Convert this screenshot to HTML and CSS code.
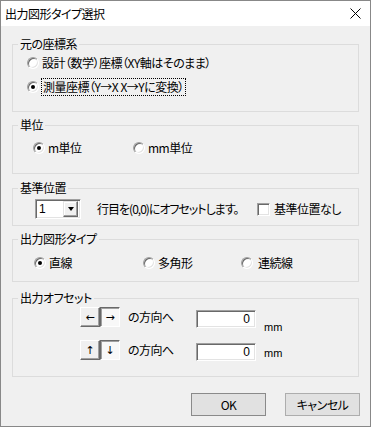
FILE: index.html
```html
<!DOCTYPE html>
<html lang="ja">
<head>
<meta charset="utf-8">
<title>出力図形タイプ選択</title>
<link rel="stylesheet" href="styles.css">
</head>
<body>
<div class="window">
  <div class="titlebar">
    <span class="title">出力図形タイプ選択</span>
    <svg class="close" width="11" height="11" viewBox="0 0 11 11"><path d="M0.5 0.5 L10.5 10.5 M10.5 0.5 L0.5 10.5" stroke="#000" stroke-width="1" fill="none"/></svg>
  </div>
  <div class="content">
    <fieldset class="group g1">
      <legend>元の座標系</legend>
      <div class="inner">
        <div class="row"><span class="radio"></span><span class="label">設計（数学）座標（XY軸はそのまま）</span></div>
        <div class="row"><span class="radio checked"></span><span class="label focus">測量座標（Y→X X→Yに変換）</span></div>
      </div>
    </fieldset>

    <fieldset class="group g2">
      <legend>単位</legend>
      <div class="inner hrow">
        <div class="opt w100"><span class="radio checked"></span><span class="label">m単位</span></div>
        <div class="opt"><span class="radio"></span><span class="label">mm単位</span></div>
      </div>
    </fieldset>

    <fieldset class="group g3">
      <legend>基準位置</legend>
      <div class="inner hrow">
        <div class="combo"><span class="combo-text">1</span><span class="combo-btn"><span class="tri"></span></span></div>
        <span class="offset-text">行目を(0,0)にオフセットします。</span>
        <div class="opt"><span class="check"></span><span class="label cb-label">基準位置なし</span></div>
      </div>
    </fieldset>

    <fieldset class="group g4">
      <legend>出力図形タイプ</legend>
      <div class="inner hrow">
        <div class="opt w109"><span class="radio checked"></span><span class="label">直線</span></div>
        <div class="opt w98"><span class="radio"></span><span class="label">多角形</span></div>
        <div class="opt"><span class="radio"></span><span class="label wide">連続線</span></div>
      </div>
    </fieldset>

    <fieldset class="group g5">
      <legend>出力オフセット</legend>
      <div class="inner">
        <div class="orow">
          <span class="tbtn">←</span><span class="tbtn pressed">→</span>
          <span class="dir">の方向へ</span>
          <span class="num">0</span>
          <span class="unit unit1">mm</span>
        </div>
        <div class="orow r2">
          <span class="tbtn">↑</span><span class="tbtn pressed">↓</span>
          <span class="dir">の方向へ</span>
          <span class="num">0</span>
          <span class="unit unit2">mm</span>
        </div>
      </div>
    </fieldset>

    <div class="buttons">
      <span class="btn default">OK</span>
      <span class="btn">キャンセル</span>
    </div>
  </div>
</div>
</body>
</html>
```

FILE: styles.css
```css
* { box-sizing: border-box; }
html, body { margin: 0; padding: 0; }
body {
  width: 371px;
  height: 427px;
  overflow: hidden;
  background: #f0f0f0;
  color: #000;
  font-family: "Noto Sans CJK JP", "Noto Sans", sans-serif;
  font-size: 12px;
  line-height: 14px;
  font-feature-settings: "palt";
  letter-spacing: -0.5px;
}
.window {
  width: 371px;
  height: 427px;
  border: 1px solid #888888;
  background: #f0f0f0;
  display: flex;
  flex-direction: column;
}
.titlebar {
  height: 25px;
  flex-shrink: 0;
  background: #ffffff;
  display: flex;
  align-items: center;
  padding-left: 4px;
}
.close { margin-left: auto; margin-right: 9px; }
.content {
  padding: 11px 11px 0 11px;
  display: flex;
  flex-direction: column;
}
.group {
  margin: 0;
  padding: 0;
  min-width: 0;
  border: 1px solid #dcdcdc;
}
.group legend {
  padding: 0 2px;
  margin-left: 5px;
  line-height: 14px;
}
.g2 { margin-top: 6px; }
.g3 { margin-top: 7px; }
.g4 { margin-top: 6px; }
.g5 { margin-top: 9px; }

.g1 .inner { padding: 4px 0 16px 14px; display: flex; flex-direction: column; gap: 8px; }
.g2 .inner { padding: 8px 0 17px 20px; }
.g3 .inner { padding: 4px 0 6px 22px; }
.g4 .inner { padding: 9px 0 10px 21px; }
.g5 .inner { padding: 2px 0 16px 67px; display: flex; flex-direction: column; gap: 13px; }

.row, .opt { display: flex; align-items: center; height: 16px; }
.hrow { display: flex; align-items: center; }
.w100 { width: 100px; }
.w109 { width: 109px; }
.w98 { width: 98px; }
.label { margin-left: 3px; line-height: 16px; white-space: nowrap; }
.label.wide { margin-left: 5px; }
.focus { outline: 1px dotted #000; outline-offset: 0; padding: 0 1px; }

.radio {
  width: 12px;
  height: 12px;
  flex-shrink: 0;
  border-radius: 50%;
  background: #fff;
  border: 1px solid;
  border-color: #a0a0a0 #ffffff #ffffff #a0a0a0;
  box-shadow: inset 1px 1px 0 #696969, inset -1px -1px 0 #e3e3e3;
  display: flex;
  align-items: center;
  justify-content: center;
}
.radio.checked::after {
  content: "";
  width: 4px;
  height: 4px;
  border-radius: 50%;
  background: #000;
}
.check {
  width: 13px;
  height: 13px;
  flex-shrink: 0;
  background: #fff;
  border: 1px solid;
  border-color: #a0a0a0 #ffffff #ffffff #a0a0a0;
  box-shadow: inset 1px 1px 0 #696969, inset -1px -1px 0 #e3e3e3;
}
.cb-label { margin-left: 4px; }

.combo {
  width: 46px;
  height: 20px;
  flex-shrink: 0;
  background: #fff;
  border: 1px solid;
  border-color: #a0a0a0 #ffffff #ffffff #a0a0a0;
  box-shadow: inset 1px 1px 0 #696969, inset -1px -1px 0 #e3e3e3;
  display: flex;
  align-items: center;
  padding: 2px 2px 2px 3px;
}
.combo-text { flex: 1; line-height: 14px; font-family: "Liberation Sans", sans-serif; letter-spacing: 0; }
.combo-btn {
  width: 15px;
  height: 16px;
  background: #f0f0f0;
  border: 1px solid;
  border-color: #e3e3e3 #696969 #696969 #e3e3e3;
  box-shadow: inset -1px -1px 0 #a0a0a0, inset 1px 1px 0 #fff;
  display: flex;
  align-items: center;
  justify-content: center;
}
.tri {
  width: 0;
  height: 0;
  border-left: 3.5px solid transparent;
  border-right: 3.5px solid transparent;
  border-top: 4px solid #000;
}
.offset-text { margin-left: 16px; width: 160px; white-space: nowrap; letter-spacing: -1px; }

.orow { display: flex; align-items: center; height: 20px; }
.tbtn {
  width: 20px;
  height: 20px;
  flex-shrink: 0;
  background: #f0f0f0;
  border: 1px solid;
  border-color: #ffffff #696969 #696969 #ffffff;
  box-shadow: inset -1px -1px 0 #a0a0a0;
  display: flex;
  align-items: center;
  justify-content: center;
  font-family: "DejaVu Sans", sans-serif;
  font-size: 11px;
  line-height: 11px;
  letter-spacing: 0;
}
.tbtn.pressed {
  border-color: #696969 #ffffff #ffffff #696969;
  box-shadow: inset 1px 1px 0 #a0a0a0;
  background: #f8f8f8;
}
.dir { width: 68px; margin-left: 8px; white-space: nowrap; }
.num {
  width: 60px;
  height: 18px;
  margin-top: 3px;
  flex-shrink: 0;
  background: #fff;
  border: 1px solid;
  border-color: #a0a0a0 #ffffff #ffffff #a0a0a0;
  box-shadow: inset 1px 1px 0 #696969, inset -1px -1px 0 #e3e3e3;
  text-align: right;
  padding-right: 5px;
  line-height: 16px;
  font-family: "Liberation Sans", sans-serif;
  letter-spacing: 0;
}
.unit { margin-left: 8px; align-self: flex-start; font-family: "Liberation Sans", sans-serif; font-size: 11px; letter-spacing: 0; }
.unit1 { margin-top: 13px; }
.unit2 { margin-top: 6px; }

.buttons {
  display: flex;
  justify-content: flex-end;
  gap: 19px;
  margin-top: 16px;
  margin-right: -1px;
}
.btn {
  width: 75px;
  height: 23px;
  background: #e1e1e1;
  border: 1px solid #adadad;
  display: flex;
  align-items: center;
  justify-content: center;
}
.btn.default { border-color: #8a8a8a; }
```
